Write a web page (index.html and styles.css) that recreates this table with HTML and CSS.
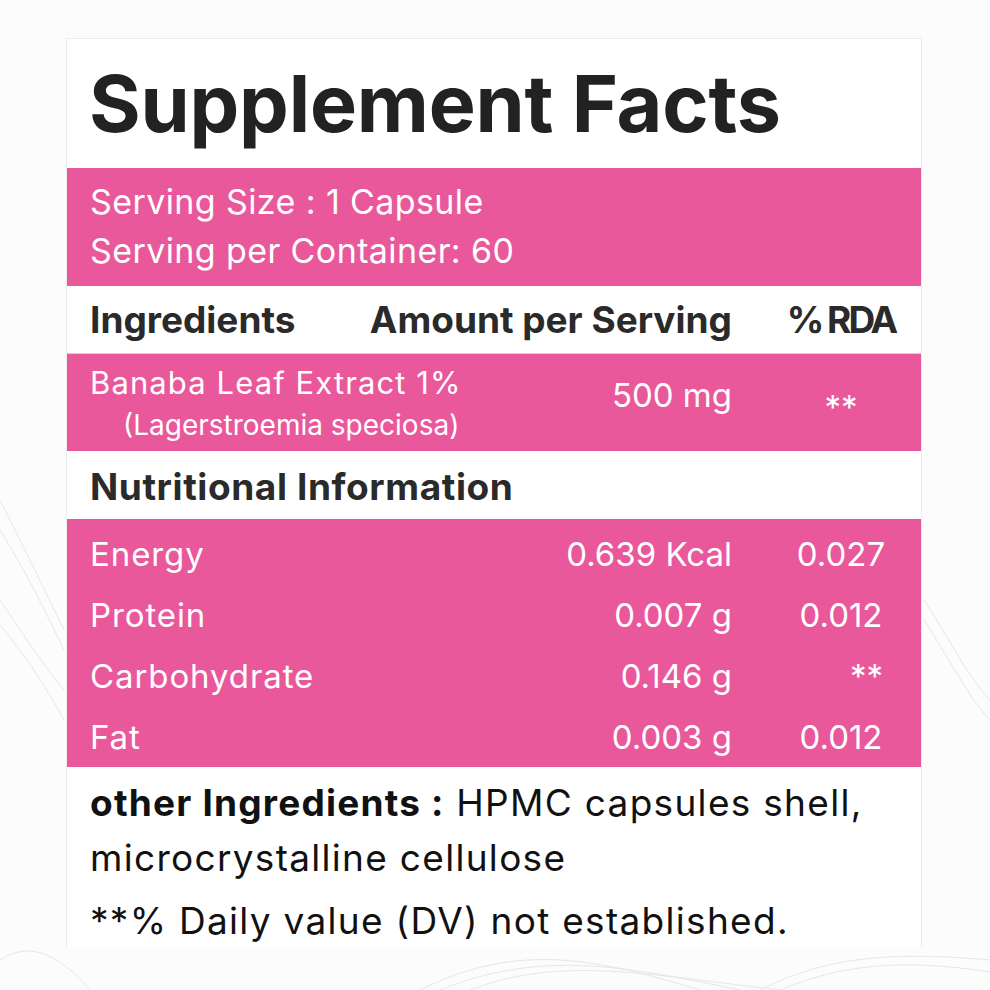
FILE: index.html
```html
<!DOCTYPE html>
<html>
	<head>
		<meta charset="UTF-8">
		<title>Supplement Facts</title>
		<link rel="stylesheet" href="styles.css">
	</head>
	<body>
		<svg class="fondo" width="990" height="990" viewBox="0 0 990 990">
			<g fill="none" stroke="#e6e6e6" stroke-width="1">
				<path d="M0 500 C 20 540, 40 580, 64 630"/>
				<path d="M0 530 C 25 570, 45 610, 64 650"/>
				<path d="M0 600 C 20 630, 40 660, 64 690"/>
				<path d="M0 625 C 25 655, 45 685, 64 720"/>
				<path d="M420 990 C 520 940, 600 960, 700 990"/>
				<path d="M440 990 C 540 950, 620 965, 740 990"/>
				<path d="M470 990 C 560 955, 650 975, 780 990"/>
				<path d="M760 990 C 820 960, 880 950, 990 960"/>
				<path d="M780 990 C 840 965, 900 958, 990 972"/>
				<path d="M924 600 C 950 640, 970 680, 990 700"/>
				<path d="M924 620 C 950 660, 970 700, 990 720"/>
				<path d="M0 960 C 30 940, 60 955, 90 990"/>
			</g>
		</svg>
		<div class="tarjeta">
			<div class="titulo">Supplement Facts</div>
			<div class="banda porcion">
				<div>Serving Size : 1 Capsule</div>
				<div>Serving per Container: 60</div>
			</div>
			<div class="fila encabezado">
				<div>Ingredients</div>
				<div class="cantidad">Amount per Serving</div>
				<div class="rda estrecho">% RDA</div>
			</div>
			<div class="banda fila ingrediente">
				<div class="nombre">
					Banaba Leaf Extract 1%
					<div class="latin">(Lagerstroemia speciosa)</div>
				</div>
				<div class="cantidad">500 mg</div>
				<div class="rda">**</div>
			</div>
			<div class="seccion">Nutritional Information</div>
			<div class="banda nutricion">
				<div class="fila dato">
					<div class="nombre">Energy</div>
					<div class="cantidad">0.639 Kcal</div>
					<div class="rda">0.027</div>
				</div>
				<div class="fila dato">
					<div class="nombre">Protein</div>
					<div class="cantidad">0.007 g</div>
					<div class="rda">0.012</div>
				</div>
				<div class="fila dato">
					<div class="nombre">Carbohydrate</div>
					<div class="cantidad">0.146 g</div>
					<div class="rda derecha">**</div>
				</div>
				<div class="fila dato">
					<div class="nombre">Fat</div>
					<div class="cantidad">0.003 g</div>
					<div class="rda">0.012</div>
				</div>
			</div>
			<div class="pie">
				<p><b>other Ingredients :</b> HPMC capsules shell,<br>microcrystalline cellulose</p>
				<p class="nota">**% Daily value (DV) not established.</p>
			</div>
		</div>
	</body>
</html>
```

FILE: styles.css
```css
body {
	margin: 0;
	background: #fcfcfc;
	font-family: Inter, "Open Sans", sans-serif;
	color: #222;
}
svg.fondo {
	position: absolute;
	left: 0;
	top: 0;
	z-index: 0;
}
div.tarjeta {
	position: relative;
	z-index: 1;
	margin: 38px 0 0 66px;
	width: 854px;
	background: #fff;
	border: 1px solid #ececec;
	border-bottom: none;
}
div.titulo {
	height: 129px;
	box-sizing: border-box;
	padding: 19px 0 0 22px;
	font-size: 79px;
	font-weight: 700;
	letter-spacing: -0.2px;
	line-height: 90px;
}
div.banda {
	background: #e9589b;
	color: #fff;
}
div.porcion {
	height: 118px;
	box-sizing: border-box;
	padding: 9px 0 0 23px;
	font-size: 34px;
	line-height: 49px;
	letter-spacing: 0.4px;
}
div.fila {
	display: grid;
	grid-template-columns: 1fr auto 160px;
	column-gap: 29px;
	align-items: center;
	padding-left: 23px;
}
div.fila .cantidad {
	text-align: right;
}
div.fila .rda {
	text-align: center;
}
div.fila .rda.derecha {
	text-align: right;
	padding-right: 38px;
}
div.encabezado {
	height: 67px;
	font-size: 37px;
	font-weight: 700;
	color: #2a2a2a;
	border-bottom: 1px solid #f3c2d8;
}
div.encabezado .estrecho {
	letter-spacing: -3px;
}
div.ingrediente {
	height: 97px;
	box-sizing: border-box;
	padding-top: 7px;
	align-items: start;
	font-size: 33px;
	line-height: 43px;
}
div.ingrediente .nombre {
	font-size: 31px;
	letter-spacing: 1.1px;
}
div.ingrediente .latin {
	font-size: 28px;
	letter-spacing: 0;
	padding-left: 33px;
}
div.ingrediente .cantidad {
	margin-top: 13px;
}
div.ingrediente .rda {
	margin-top: 25px;
}
div.seccion {
	height: 68px;
	box-sizing: border-box;
	padding: 13px 0 0 23px;
	font-size: 37px;
	font-weight: 700;
	letter-spacing: 0.6px;
	line-height: 45px;
	color: #2a2a2a;
}
div.nutricion {
	height: 248px;
	box-sizing: border-box;
	padding-top: 4px;
}
div.dato {
	height: 61px;
	font-size: 33px;
}
div.dato .nombre {
	letter-spacing: 0.9px;
}
div.pie {
	padding: 8px 0 0 23px;
	font-size: 37px;
	line-height: 55px;
	letter-spacing: 1.3px;
	color: #111;
}
div.pie b {
	letter-spacing: 1.2px;
}
div.pie p {
	margin: 0;
}
div.pie p.nota {
	margin-top: 8px;
}
```
